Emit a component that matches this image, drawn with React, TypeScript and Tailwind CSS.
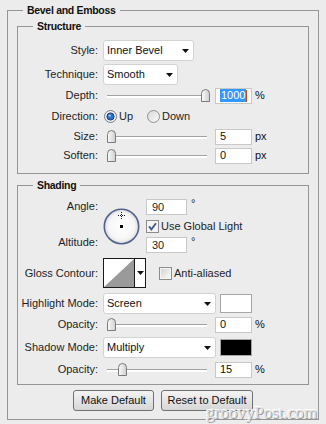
import React from "react";

const Arrow = () => (
  <svg width="7" height="4" viewBox="0 0 7 4">
    <path d="M0 0h7L3.5 4z" fill="#111" />
  </svg>
);

function Label({ children }: { children: React.ReactNode }) {
  return (
    <div className="w-[80px] shrink-0 text-right text-[11px] leading-none text-[#1e1e1e]">{children}</div>
  );
}

function Dropdown({ text, className }: { text: string; className: string }) {
  return (
    <div
      className={
        "flex h-[21px] items-center justify-between rounded-[3px] border border-[#d2d2d2] bg-white pl-[3px] pr-[4px] text-[11px] text-[#111] " +
        className
      }
    >
      <span>{text}</span>
      <Arrow />
    </div>
  );
}

function Thumb() {
  return (
    <svg width="9" height="13" viewBox="0 0 9 13">
      <defs>
        <linearGradient id="tg" x1="0" y1="0" x2="1" y2="0">
          <stop offset="0" stopColor="#fbfbfb" />
          <stop offset="1" stopColor="#cfcfcf" />
        </linearGradient>
      </defs>
      <path d="M0.5 12.5V4.5A4 4 0 0 1 8.5 4.5V12.5Z" fill="url(#tg)" stroke="#7a7a7a" />
    </svg>
  );
}

function Slider({ pos }: { pos: number }) {
  return (
    <div className="relative h-[16px] w-[110px] shrink-0">
      <div className="absolute left-[4px] right-[6px] top-[7px] h-[3px] border-t border-[#a3a3a3] bg-white" />
      <div className="absolute top-[1px]" style={{ left: pos }}>
        <Thumb />
      </div>
    </div>
  );
}

function NumInput({ value, selected }: { value: string; selected?: boolean }) {
  return (
    <div className="ml-[2px] flex h-[16px] w-[37px] shrink-0 items-center border border-[#c8c8c8] bg-white pl-[4px] text-[11px] leading-none text-[#111]">
      {selected ? (
        <>
          <span className="bg-[#3399ff] px-[1px] py-[1px] text-white">{value}</span>
          <span className="h-[12px] w-[1px] bg-[#c04a10]" />
        </>
      ) : (
        <span>{value}</span>
      )}
    </div>
  );
}

function SliderRow({ label, pos, value, unit, selected, className }: { label: string; pos: number; value: string; unit: string; selected?: boolean; className: string }) {
  return (
    <div className={"flex items-center gap-[5px] " + className}>
      <Label>{label}</Label>
      <div className="flex items-center">
        <Slider pos={pos} />
        <NumInput value={value} selected={selected} />
        <span className="ml-[3px] text-[11px] leading-none text-[#111]">{unit}</span>
      </div>
    </div>
  );
}

const RadioOn = () => (
  <svg width="13" height="13" viewBox="0 0 13 13">
    <circle cx="6.5" cy="6.5" r="6" fill="#f2f2f2" stroke="#6d7b90" />
    <circle cx="6.5" cy="6.5" r="3.6" fill="#2a72c8" stroke="#1b3c6a" />
    <circle cx="5.7" cy="5.6" r="1.2" fill="#9cc8f4" />
  </svg>
);

const RadioOff = () => (
  <svg width="13" height="13" viewBox="0 0 13 13">
    <defs>
      <linearGradient id="rg" x1="0" y1="0" x2="1" y2="1">
        <stop offset="0" stopColor="#d8d8d8" />
        <stop offset="1" stopColor="#fafafa" />
      </linearGradient>
    </defs>
    <circle cx="6.5" cy="6.5" r="6" fill="url(#rg)" stroke="#8e8e8e" />
  </svg>
);

const CheckOn = () => (
  <svg width="13" height="13" viewBox="0 0 13 13">
    <rect x="0.5" y="0.5" width="12" height="12" fill="#f4f4f4" stroke="#8c8c8c" />
    <path d="M3 6.3L5.4 9.4L10 3.2" stroke="#4a5d8a" strokeWidth="1.9" fill="none" />
  </svg>
);

const CheckOff = () => (
  <svg width="13" height="13" viewBox="0 0 13 13">
    <defs>
      <linearGradient id="cg" x1="0" y1="0" x2="1" y2="1">
        <stop offset="0" stopColor="#d6d6d6" />
        <stop offset="1" stopColor="#f8f8f8" />
      </linearGradient>
    </defs>
    <rect x="0.5" y="0.5" width="12" height="12" fill="#f4f4f4" stroke="#8c8c8c" />
    <rect x="2" y="2" width="9" height="9" fill="url(#cg)" />
  </svg>
);

const Dial = () => (
  <svg width="37" height="37" viewBox="0 0 37 37">
    <defs>
      <radialGradient id="dg" cx="0.5" cy="0.5" r="0.5">
        <stop offset="0" stopColor="#ffffff" />
        <stop offset="0.75" stopColor="#f6f6f6" />
        <stop offset="1" stopColor="#dcdcdc" />
      </radialGradient>
    </defs>
    <circle cx="18.5" cy="18.5" r="17.2" fill="url(#dg)" stroke="#52638c" strokeWidth="1.6" />
    <path d="M15 7.5H22M18.5 4V11" stroke="#111" strokeWidth="1" strokeDasharray="1 1" />
    <rect x="17" y="17" width="3" height="3" fill="#000" />
  </svg>
);

export default function App() {
  return (
    <div className="relative h-[424px] w-[326px] overflow-hidden bg-[#ececec] pt-[3px] font-['Liberation_Sans',Arial,sans-serif] text-[#1e1e1e]">
      <fieldset className="mx-[7px] min-w-0 border border-[#959595] px-[9px] pb-[8px]">
        <legend className="ml-[6px] px-[4px] text-[10.5px] font-bold leading-[14px] tracking-[-0.3px] text-[#111]">
          Bevel and Emboss
        </legend>

        <fieldset className="mt-[2px] min-w-0 border border-[#959595] px-0 pb-[8px] pt-[7px]">
          <legend className="ml-[15px] px-[4px] text-[10.5px] font-bold leading-[14px] tracking-[-0.3px] text-[#111]">
            Structure
          </legend>
          <div className="flex flex-col">
            <div className="flex h-[21px] items-center gap-[5px]">
              <Label>Style:</Label>
              <Dropdown text="Inner Bevel" className="w-[91px]" />
            </div>
            <div className="mt-[3px] flex h-[21px] items-center gap-[5px]">
              <Label>Technique:</Label>
              <Dropdown text="Smooth" className="w-[75px]" />
            </div>
            <SliderRow label="Depth:" pos={98} value="1000" unit="%" selected className="h-[21px]" />
            <div className="flex h-[21px] items-center gap-[5px]">
              <Label>Direction:</Label>
              <div className="flex items-center text-[11px] leading-none">
                <div className="flex w-[44px] items-center">
                  <span className="ml-[1px] flex">
                    <RadioOn />
                  </span>
                  <span className="ml-[2px]">Up</span>
                </div>
                <RadioOff />
                <span className="ml-[2px]">Down</span>
              </div>
            </div>
            <SliderRow label="Size:" pos={4} value="5" unit="px" className="h-[19px]" />
            <SliderRow label="Soften:" pos={4} value="0" unit="px" className="h-[19px]" />
          </div>
        </fieldset>

        <fieldset className="mt-[4px] min-w-0 border border-[#959595] px-0 pb-[4px] pt-[6px]">
          <legend className="ml-[15px] px-[4px] text-[10.5px] font-bold leading-[14px] tracking-[-0.3px] text-[#111]">
            Shading
          </legend>
          <div className="flex flex-col">
            <div className="flex">
              <div className="flex w-[80px] shrink-0 flex-col">
                <div className="flex h-[17px] items-center justify-end text-[11px] leading-none">Angle:</div>
                <div className="mt-[19px] flex h-[17px] items-center justify-end text-[11px] leading-none">Altitude:</div>
              </div>
              <div className="ml-[5px] mt-[10px] flex">
                <Dial />
              </div>
              <div className="ml-[6px] flex flex-col">
                <div className="flex h-[18px] items-center">
                  <div className="flex h-[16px] w-[41px] items-center border border-[#c8c8c8] bg-white pl-[5px] text-[11px] leading-none">90</div>
                  <span className="ml-[4px] self-start text-[11px] leading-none">°</span>
                </div>
                <div className="flex h-[20px] items-center text-[11px] leading-none">
                  <CheckOn />
                  <span className="ml-[2px]">Use Global Light</span>
                </div>
                <div className="flex h-[18px] items-center">
                  <div className="flex h-[16px] w-[41px] items-center border border-[#c8c8c8] bg-white pl-[5px] text-[11px] leading-none">30</div>
                  <span className="ml-[4px] self-start text-[11px] leading-none">°</span>
                </div>
              </div>
            </div>

            <div className="mt-[4px] flex h-[30px] items-center gap-[5px]">
              <Label>Gloss Contour:</Label>
              <div className="flex h-[30px] w-[43px] border border-[#1a1a1a] bg-white">
                <svg width="30" height="28" viewBox="0 0 30 28">
                  <rect width="30" height="28" fill="#fff" />
                  <polygon points="0,28 30,0 30,28" fill="#9a9a9a" />
                </svg>
                <div className="flex flex-1 items-center justify-center border-l border-[#1a1a1a]">
                  <Arrow />
                </div>
              </div>
              <div className="ml-[8px] flex items-center text-[11px] leading-none">
                <CheckOff />
                <span className="ml-[2px]">Anti-aliased</span>
              </div>
            </div>

            <div className="mt-[5px] flex h-[21px] items-center gap-[5px]">
              <Label>Highlight Mode:</Label>
              <Dropdown text="Screen" className="w-[113px]" />
              <div className="ml-[-1px] h-[19px] w-[32px] border border-[#a5a5a5] bg-white" />
            </div>
            <SliderRow label="Opacity:" pos={4} value="0" unit="%" className="h-[21px]" />
            <div className="mt-[2px] flex h-[21px] items-center gap-[5px]">
              <Label>Shadow Mode:</Label>
              <Dropdown text="Multiply" className="w-[113px]" />
              <div className="ml-[-1px] h-[17px] w-[32px] border border-[#a5a5a5] bg-black" />
            </div>
            <SliderRow label="Opacity:" pos={15} value="15" unit="%" className="mt-[1px] h-[21px]" />
          </div>
        </fieldset>

        <div className="mt-[5px] flex justify-center gap-[7px]">
          <button className="h-[21px] w-[81px] rounded-[3px] border border-[#707070] bg-linear-to-b from-[#f4f4f4] to-[#d6d6d6] text-[11px] leading-none text-[#111]">
            Make Default
          </button>
          <button className="h-[21px] w-[92px] rounded-[3px] border border-[#707070] bg-linear-to-b from-[#f4f4f4] to-[#d6d6d6] text-[11px] leading-none text-[#111]">
            Reset to Default
          </button>
        </div>
      </fieldset>

      <div className="absolute left-[206px] top-[404px] font-['Liberation_Serif',serif] text-[17px] leading-none text-[#e2e2e2] [text-shadow:1px_1px_0_#9a9a9a,-1px_-1px_0_#ffffff]">
        groovyPost.com
      </div>
    </div>
  );
}
